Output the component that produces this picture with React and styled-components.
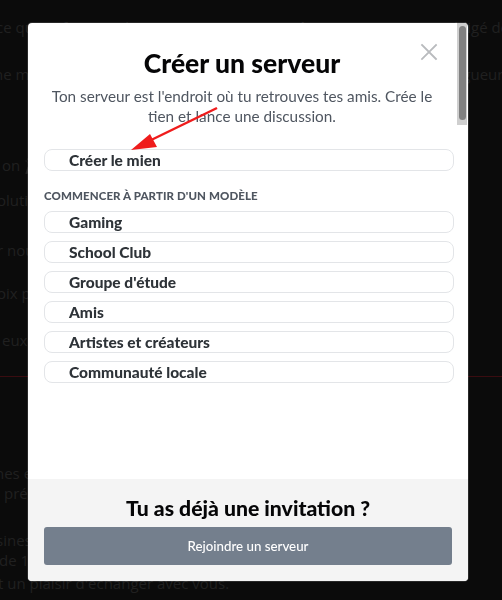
import React from "react";
import styled, { createGlobalStyle } from "styled-components";

const Global = createGlobalStyle`
  html, body { margin: 0; padding: 0; background: #0b0b0b; }
  body { width: 502px; height: 600px; overflow: hidden; }
`;

const Page = styled.div`
  height: 600px;
  overflow: hidden;
  font-family: "Open Sans", "Noto Sans", sans-serif;
  font-size: 15px;
  line-height: 20px;
  color: #202020;
`;

const BgLine = styled.div`
  white-space: nowrap;
  margin-top: ${(p) => p.$gap}px;
  margin-left: ${(p) => p.$shift || 0}px;
`;

const Dim = styled.span`
  filter: grayscale(1) brightness(0.18);
`;

const BgRule = styled.div`
  height: 1px;
  background: #3a0c10;
  margin-top: ${(p) => p.$gap}px;
`;

const Overlay = styled.div`
  position: fixed;
  inset: 0;
  display: flex;
  align-items: flex-start;
  padding: 23px 0 0 28px;
  font-family: "Lato", "Noto Sans", sans-serif;
`;

const Modal = styled.div`
  position: relative;
  width: 440px;
  height: 558px;
  background: #ffffff;
  border-radius: 4px;
  overflow: hidden;
  display: flex;
  flex-direction: column;
  box-shadow: 0 0 0 1px rgba(255, 255, 255, 0.12);
`;

const Scrollbar = styled.div`
  position: absolute;
  top: 0;
  right: 1px;
  width: 10px;
  height: 102px;
  background: #cfcfcf;
  display: flex;
  justify-content: center;
  padding-top: 3px;
  box-sizing: border-box;
`;

const Thumb = styled.div`
  width: 7px;
  height: 94px;
  border-radius: 4px;
  background: #808080;
`;

const Close = styled.button`
  position: absolute;
  top: 20px;
  right: 30px;
  width: 18px;
  height: 18px;
  padding: 0;
  border: none;
  background: none;
  display: flex;
  align-items: center;
  justify-content: center;
`;

const Body = styled.div`
  flex: 1;
  display: flex;
  flex-direction: column;
  padding: 25px 14px 0 16px;
`;

const Title = styled.h1`
  margin: 0 -2px 0 -16px;
  text-align: center;
  font-size: 26.5px;
  line-height: 30px;
  font-weight: 900;
  color: #060607;
`;

const Subtitle = styled.p`
  margin: 8px -2px 0 -16px;
  text-align: center;
  font-size: 15.3px;
  line-height: 20px;
  color: #4f5660;
  padding: 0 18px;
`;

const OptionList = styled.div`
  display: flex;
  flex-direction: column;
  gap: 8px;
  margin-top: ${(p) => p.$top || 0}px;
`;

const Option = styled.button`
  height: 22px;
  box-sizing: border-box;
  border: 1px solid #e3e5e8;
  border-radius: 8px;
  background: #fff;
  padding: 0 0 0 24px;
  text-align: left;
  font-family: "Lato", "Noto Sans", sans-serif;
  font-size: 15.5px;
  font-weight: 900;
  line-height: 20px;
  color: #2e3338;
`;

const SectionLabel = styled.div`
  margin-top: 17px;
  font-size: 11.5px;
  line-height: 16px;
  font-weight: 900;
  letter-spacing: 0.1px;
  text-transform: uppercase;
  color: #4f5660;
`;

const Footer = styled.div`
  background: #f4f4f4;
  height: 102px;
  box-sizing: border-box;
  padding: 17px 16px 16px;
  display: flex;
  flex-direction: column;
  gap: 7px;
`;

const FooterTitle = styled.h2`
  margin: 0;
  text-align: center;
  font-size: 21.2px;
  line-height: 24px;
  font-weight: 900;
  color: #060607;
`;

const JoinButton = styled.button`
  height: 38px;
  width: 408px;
  border: none;
  border-radius: 3px;
  background: #747f8d;
  color: #fff;
  font-family: "Lato", "Noto Sans", sans-serif;
  font-size: 13.3px;
  font-weight: 500;
`;

const Annotation = styled.svg`
  position: fixed;
  left: 0;
  top: 0;
  pointer-events: none;
`;

const templates = [
  "Gaming",
  "School Club",
  "Groupe d'étude",
  "Amis",
  "Artistes et créateurs",
  "Communauté locale",
];

export default function App() {
  return (
    <>
      <Global />
      <Page>
        <BgLine $gap={17} $shift={-4}>ce que je fais tous les jours avec passion, même si je ne suis pas obligé de le faire</BgLine>
        <BgLine $gap={27} $shift={-6}>ne me suis jamais senti aussi bien dans ma vie, comme un vrai navigueur au long cours</BgLine>
        <BgLine $gap={71} $shift={2}>on <Dim>🎉</Dim> ?</BgLine>
        <BgLine $gap={15} $shift={-3}>olution</BgLine>
        <BgLine $gap={30} $shift={-3}>r nous</BgLine>
        <BgLine $gap={23} $shift={-3}>oix pour</BgLine>
        <BgLine $gap={27} $shift={2}>eux</BgLine>
        <BgRule $gap={26} />
        <BgLine $gap={86} $shift={-5}>nes et</BgLine>
        <BgLine $gap={0} $shift={4}>présentation de notre équipe et de toute notre longue expérience</BgLine>
        <BgLine $gap={27} $shift={-4}>sines</BgLine>
        <BgLine $gap={0} $shift={-1}>de 1990</BgLine>
        <BgLine $gap={3} $shift={-2}>t un plaisir d'échanger avec vous.</BgLine>
      </Page>
      <Overlay>
        <Modal>
          <Close aria-label="Fermer">
            <svg width="18" height="18" viewBox="0 0 18 18">
              <path d="M2 2 L16 16 M16 2 L2 16" stroke="#b9bbbe" strokeWidth="1.8" strokeLinecap="square" />
            </svg>
          </Close>
          <Scrollbar>
            <Thumb />
          </Scrollbar>
          <Body>
            <Title>Créer un serveur</Title>
            <Subtitle>
              Ton serveur est l'endroit où tu retrouves tes amis. Crée le tien et lance une discussion.
            </Subtitle>
            <OptionList $top={23}>
              <Option>Créer le mien</Option>
            </OptionList>
            <SectionLabel>Commencer à partir d'un modèle</SectionLabel>
            <OptionList $top={7}>
              {templates.map((t) => (
                <Option key={t}>{t}</Option>
              ))}
            </OptionList>
          </Body>
          <Footer>
            <FooterTitle>Tu as déjà une invitation ?</FooterTitle>
            <JoinButton>Rejoindre un serveur</JoinButton>
          </Footer>
        </Modal>
      </Overlay>
      <Annotation width="502" height="600" viewBox="0 0 502 600">
        <line x1="217" y1="108" x2="145" y2="143" stroke="#ef1c1c" strokeWidth="2.5" />
        <polygon points="131,150 150,134 157,147" fill="#ef1c1c" />
      </Annotation>
    </>
  );
}
